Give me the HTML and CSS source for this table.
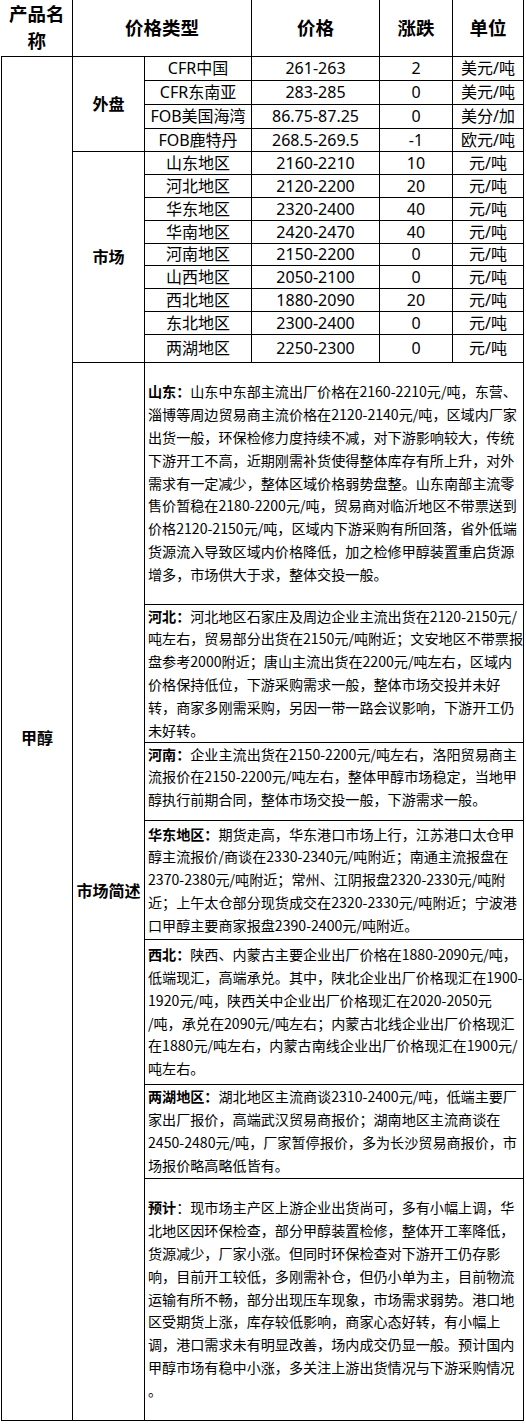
FILE: index.html
```html
<!DOCTYPE html>
<html lang="zh-CN">
<head>
<meta charset="utf-8">
<title>甲醇价格</title>
<link rel="stylesheet" href="styles.css">
</head>
<body>
<table class="price-table">
  <colgroup>
    <col class="c1"><col class="c2"><col class="c3"><col class="c4"><col class="c5"><col class="c6">
  </colgroup>
  <thead>
    <tr class="head">
      <th class="h-name">产品名称</th>
      <th colspan="2">价格类型</th>
      <th>价格</th>
      <th>涨跌</th>
      <th>单位</th>
    </tr>
  </thead>
  <tbody>
    <tr class="r24"><td rowspan="20" class="label">甲醇</td><td rowspan="4" class="label">外盘</td><td>CFR中国</td><td>261-263</td><td>2</td><td>美元/吨</td></tr>
    <tr class="r24"><td>CFR东南亚</td><td>283-285</td><td>0</td><td>美元/吨</td></tr>
    <tr class="r24"><td>FOB美国海湾</td><td>86.75-87.25</td><td>0</td><td>美分/加</td></tr>
    <tr class="r23"><td>FOB鹿特丹</td><td>268.5-269.5</td><td>-1</td><td>欧元/吨</td></tr>
    <tr class="r23"><td rowspan="9" class="label">市场</td><td>山东地区</td><td>2160-2210</td><td>10</td><td>元/吨</td></tr>
    <tr class="r23"><td>河北地区</td><td>2120-2200</td><td>20</td><td>元/吨</td></tr>
    <tr class="r23"><td>华东地区</td><td>2320-2400</td><td>40</td><td>元/吨</td></tr>
    <tr class="r23"><td>华南地区</td><td>2420-2470</td><td>40</td><td>元/吨</td></tr>
    <tr class="r22"><td>河南地区</td><td>2150-2200</td><td>0</td><td>元/吨</td></tr>
    <tr class="r23"><td>山西地区</td><td>2050-2100</td><td>0</td><td>元/吨</td></tr>
    <tr class="r23"><td>西北地区</td><td>1880-2090</td><td>20</td><td>元/吨</td></tr>
    <tr class="r23"><td>东北地区</td><td>2300-2400</td><td>0</td><td>元/吨</td></tr>
    <tr class="r28"><td>两湖地区</td><td>2250-2300</td><td>0</td><td>元/吨</td></tr>
    <tr class="d-shandong">
      <td rowspan="7" class="label">市场简述</td>
      <td colspan="4" class="desc"><b>山东：</b>山东中东部主流出厂价格在2160-2210元/吨，东营、<br>淄博等周边贸易商主流价格在2120-2140元/吨，区域内厂家<br>出货一般，环保检修力度持续不减，对下游影响较大，传统<br>下游开工不高，近期刚需补货使得整体库存有所上升，对外<br>需求有一定减少，整体区域价格弱势盘整。山东南部主流零<br>售价暂稳在2180-2200元/吨，贸易商对临沂地区不带票送到<br>价格2120-2150元/吨，区域内下游采购有所回落，省外低端<br>货源流入导致区域内价格降低，加之检修甲醇装置重启货源<br>增多，市场供大于求，整体交投一般。</td>
    </tr>
    <tr class="d-hebei">
      <td colspan="4" class="desc"><b>河北：</b>河北地区石家庄及周边企业主流出货在2120-2150元/<br>吨左右，贸易部分出货在2150元/吨附近；文安地区不带票报<br>盘参考2000附近；唐山主流出货在2200元/吨左右，区域内<br>价格保持低位，下游采购需求一般，整体市场交投并未好<br>转，商家多刚需采购，另因一带一路会议影响，下游开工仍<br>未好转。</td>
    </tr>
    <tr class="d-henan">
      <td colspan="4" class="desc top"><b>河南：</b>企业主流出货在2150-2200元/吨左右，洛阳贸易商主<br>流报价在2150-2200元/吨左右，整体甲醇市场稳定，当地甲<br>醇执行前期合同，整体市场交投一般，下游需求一般。</td>
    </tr>
    <tr class="d-huadong">
      <td colspan="4" class="desc"><b>华东地区：</b>期货走高，华东港口市场上行，江苏港口太仓甲<br>醇主流报价/商谈在2330-2340元/吨附近；南通主流报盘在<br>2370-2380元/吨附近；常州、江阴报盘2320-2330元/吨附<br>近；上午太仓部分现货成交在2320-2330元/吨附近；宁波港<br>口甲醇主要商家报盘2390-2400元/吨附近。</td>
    </tr>
    <tr class="d-xibei">
      <td colspan="4" class="desc"><b>西北：</b>陕西、内蒙古主要企业出厂价格在1880-2090元/吨，<br>低端现汇，高端承兑。其中，陕北企业出厂价格现汇在1900-<br>1920元/吨，陕西关中企业出厂价格现汇在2020-2050元<br>/吨，承兑在2090元/吨左右；内蒙古北线企业出厂价格现汇<br>在1880元/吨左右，内蒙古南线企业出厂价格现汇在1900元/<br>吨左右。</td>
    </tr>
    <tr class="d-lianghu">
      <td colspan="4" class="desc"><b>两湖地区：</b>湖北地区主流商谈2310-2400元/吨，低端主要厂<br>家出厂报价，高端武汉贸易商报价；湖南地区主流商谈在<br>2450-2480元/吨，厂家暂停报价，多为长沙贸易商报价，市<br>场报价略高略低皆有。</td>
    </tr>
    <tr class="d-yuji">
      <td colspan="4" class="desc"><b>预计</b>：现市场主产区上游企业出货尚可，多有小幅上调，华<br>北地区因环保检查，部分甲醇装置检修，整体开工率降低，<br>货源减少，厂家小涨。但同时环保检查对下游开工仍存影<br>响，目前开工较低，多刚需补仓，但仍小单为主，目前物流<br>运输有所不畅，部分出现压车现象，市场需求弱势。港口地<br>区受期货上涨，库存较低影响，商家心态好转，有小幅上<br>调，港口需求未有明显改善，场内成交仍显一般。预计国内<br>甲醇市场有稳中小涨，多关注上游出货情况与下游采购情况<br>。</td>
    </tr>
  </tbody>
</table>
</body>
</html>
```

FILE: styles.css
```css
html, body {
  margin: 0;
  padding: 0;
  background: #ffffff;
}

.price-table {
  border-collapse: collapse;
  table-layout: fixed;
  width: 523px;
  margin-left: 1px;
  font-family: "Noto Sans", "Noto Sans CJK SC", sans-serif;
  color: #000000;
}

.c1 { width: 71px; }
.c2 { width: 72px; }
.c3 { width: 107px; }
.c4 { width: 128px; }
.c5 { width: 73px; }
.c6 { width: 71px; }

.price-table td,
.price-table th {
  border: 1px solid #000000;
  padding: 0;
  text-align: center;
  vertical-align: middle;
  font-size: 16px;
  line-height: 20px;
  font-weight: normal;
}

.price-table th {
  border-top: none;
  font-weight: bold;
  font-size: 18.5px;
  line-height: 26.5px;
}

.price-table th.h-name {
  border-left: none;
}

.head { height: 56px; }
.r24 { height: 24px; }
.r23 { height: 23px; }
.r22 { height: 22px; }
.r28 { height: 28px; }

.price-table td.label {
  font-weight: bold;
  white-space: nowrap;
}

.price-table td.desc {
  text-align: left;
  font-family: "Noto Sans CJK SC", sans-serif;
  font-size: 14.1px;
  line-height: 22.8px;
  padding-left: 3px;
  white-space: nowrap;
  overflow: hidden;
}

.price-table td.desc b {
  font-weight: bold;
}

.price-table td.top {
  vertical-align: top;
}

.d-shandong { height: 242px; }
.d-hebei { height: 138px; }
.d-henan { height: 78px; }
.d-huadong { height: 119px; }
.d-xibei { height: 145px; }
.d-lianghu { height: 94px; }
.d-yuji { height: 242px; }
```
